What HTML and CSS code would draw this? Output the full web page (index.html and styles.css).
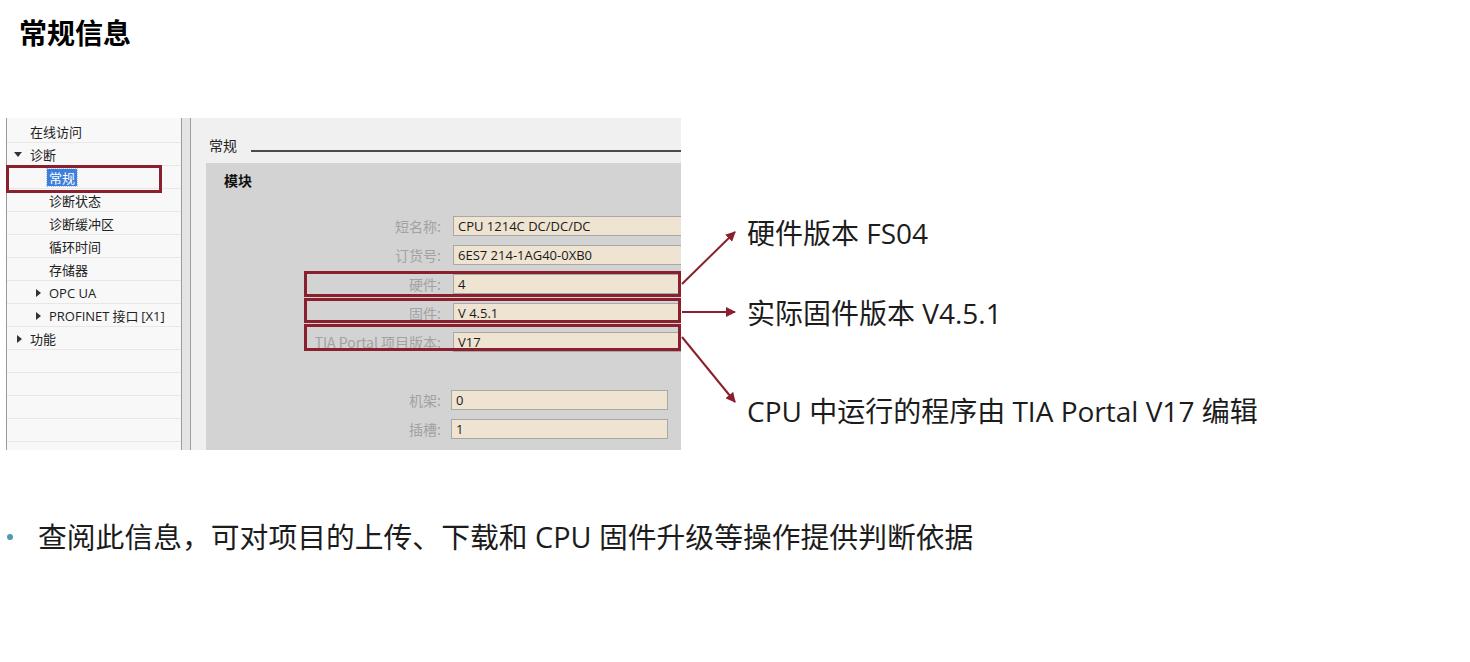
FILE: index.html
```html
<!DOCTYPE html>
<html>
  <head>
    <meta charset="utf-8" />
    <link rel="stylesheet" href="styles.css">
    <title>常规信息</title>
  </head>
  <body>
    <h1 class="title">常规信息</h1>

    <div class="figure">
      <div class="shot">
        <div class="tree">
          <div class="node lvl0">在线访问</div>
          <div class="node top"><span class="caret down"></span>诊断</div>
          <div class="node lvl1"><span class="sel">常规</span></div>
          <div class="node lvl1">诊断状态</div>
          <div class="node lvl1">诊断缓冲区</div>
          <div class="node lvl1">循环时间</div>
          <div class="node lvl1">存储器</div>
          <div class="node sub"><span class="caret right"></span><span class="latin">OPC UA</span></div>
          <div class="node sub"><span class="caret right"></span><span><span class="latin">PROFINET</span> 接口 <span class="latin">[X1]</span></span></div>
          <div class="node top2"><span class="caret right"></span>功能</div>
        </div>
        <div class="splitter"></div>
        <div class="pane">
          <div class="pane-head">
            <span class="pane-name">常规</span>
            <span class="rule"></span>
          </div>
          <div class="module">
            <div class="module-title">模块</div>
            <div class="fields">
              <div class="field"><span class="label">短名称:</span><span class="input">CPU 1214C DC/DC/DC</span></div>
              <div class="field"><span class="label">订货号:</span><span class="input">6ES7 214-1AG40-0XB0</span></div>
              <div class="field"><span class="label">硬件:</span><span class="input">4</span></div>
              <div class="field"><span class="label">固件:</span><span class="input">V 4.5.1</span></div>
              <div class="field"><span class="label">TIA Portal 项目版本:</span><span class="input">V17</span></div>
              <div class="field short spaced"><span class="label">机架:</span><span class="input">0</span></div>
              <div class="field short"><span class="label">插槽:</span><span class="input">1</span></div>
            </div>
          </div>
        </div>

        <!-- annotation boxes over the screenshot -->
        <div class="mark mark-sel"></div>
        <div class="mark mark-hw"></div>
        <div class="mark mark-fw"></div>
        <div class="mark mark-tia"></div>
      </div>

      <div class="notes">
        <div class="note note-hw">硬件版本 FS04</div>
        <div class="note note-fw">实际固件版本 V4.5.1</div>
        <div class="note note-tia">CPU 中运行的程序由 TIA Portal V17 编辑</div>
      </div>

      <svg class="arrows" width="760" height="332" viewBox="0 0 760 332">
        <defs>
          <marker id="head" viewBox="0 0 10 10" refX="9" refY="5" markerWidth="5" markerHeight="5" orient="auto">
            <path d="M0,0 L10,5 L0,10 z" fill="#8a1f2d" />
          </marker>
        </defs>
        <line x1="682" y1="166" x2="735" y2="114" marker-end="url(#head)" />
        <line x1="682" y1="194" x2="735" y2="194" marker-end="url(#head)" />
        <line x1="682" y1="219" x2="735" y2="284" marker-end="url(#head)" />
      </svg>
    </div>

    <p class="bullet">查阅此信息，可对项目的上传、下载和 CPU 固件升级等操作提供判断依据</p>
  </body>
</html>
```

FILE: styles.css
```css
body {
  margin: 0;
  font-family: "Open Sans", "Noto Sans CJK SC", sans-serif;
  color: #1c1c1c;
  background: #fff;
}

.title {
  margin: 0;
  padding: 13px 0 0 19px;
  font-size: 28px;
  line-height: 40px;
  font-weight: bold;
  color: #000;
}

.figure {
  position: relative;
  display: flex;
  margin-top: 65px;
}

/* screenshot of the TIA portal dialog */
.shot {
  position: relative;
  display: flex;
  flex: none;
  width: 675px;
  height: 332px;
  margin-left: 6px;
  overflow: hidden;
  font-family: "Noto Sans CJK SC", sans-serif;
  font-size: 13px;
}

.tree {
  flex: none;
  width: 174px;
  padding-top: 2px;
  border-left: 1px solid #9a9a9a;
  background-color: #f8f8f8;
  background-image: repeating-linear-gradient(to bottom, transparent 0 22px, #e7e7e7 22px 23px);
  background-position: 0 2px;
  color: #222;
}

.node {
  display: flex;
  align-items: center;
  height: 23px;
  white-space: nowrap;
}

.lvl0 {
  padding-left: 23px;
}

.lvl1 {
  padding-left: 42px;
}

.top {
  padding-left: 7px;
}

.top .caret {
  margin-right: 8px;
}

.top2 {
  padding-left: 10px;
}

.top2 .caret,
.sub .caret {
  margin-right: 8px;
}

.sub {
  padding-left: 29px;
}

.caret {
  display: inline-block;
  width: 0;
  height: 0;
}

.caret.down {
  border-left: 4px solid transparent;
  border-right: 4px solid transparent;
  border-top: 5px solid #333;
}

.caret.right {
  border-top: 4px solid transparent;
  border-bottom: 4px solid transparent;
  border-left: 5px solid #333;
}

.latin {
  font-family: "Open Sans", sans-serif;
  font-size: 13px;
}

.sel {
  padding: 0 2px;
  margin-left: -2px;
  background: #3d7fdc;
  color: #fff;
  outline: 1px dotted #a9c6f0;
  line-height: 17px;
}

.splitter {
  flex: none;
  width: 8px;
  border-left: 1px solid #9c9c9c;
  border-right: 1px solid #9c9c9c;
  background: #e4e4e4;
}

.pane {
  display: flex;
  flex-direction: column;
  flex: 1;
  min-width: 0;
  padding-left: 15px;
  background: #f0f0f0;
}

.pane-head {
  display: flex;
  align-items: flex-start;
  height: 45px;
  padding-left: 3px;
}

.pane-name {
  margin-top: 18px;
  line-height: 18px;
  font-size: 14px;
  color: #222;
}

.rule {
  flex: 1;
  height: 2px;
  margin: 32px 0 0 14px;
  background: #4a4a4a;
}

.module {
  flex: 1;
  padding: 8px 0 0 18px;
  background: #d3d3d3;
}

.module-title {
  font-size: 14px;
  line-height: 18px;
  font-weight: bold;
  color: #111;
}

.fields {
  margin-top: 22px;
  padding-left: 80px;
}

.field {
  display: flex;
  align-items: center;
  height: 29px;
}

.field.spaced {
  margin-top: 29px;
}

.label {
  flex: none;
  width: 137px;
  padding-right: 6px;
  margin-right: 6px;
  text-align: right;
  font-size: 14px;
  color: #a2a2a2;
  white-space: nowrap;
}

.input {
  flex: none;
  box-sizing: border-box;
  width: 260px;
  height: 20px;
  padding: 0 4px;
  border: 1px solid #a8a8a8;
  background: #efe3d1;
  font-family: "Open Sans", sans-serif;
  font-size: 13px;
  line-height: 18px;
  color: #1a1a1a;
  white-space: nowrap;
}

.short .input {
  width: 217px;
  margin-left: -2px;
}

.mark {
  position: absolute;
  box-sizing: border-box;
  border: 3px solid #8a1f2d;
}

.mark-sel {
  left: 0;
  top: 47px;
  width: 156px;
  height: 28px;
}

.mark-hw {
  left: 298px;
  top: 153px;
  width: 377px;
  height: 26px;
}

.mark-fw {
  left: 298px;
  top: 180px;
  width: 377px;
  height: 25px;
}

.mark-tia {
  left: 298px;
  top: 206px;
  width: 377px;
  height: 27px;
}

/* callouts */
.notes {
  padding: 95px 0 0 66px;
  font-size: 28px;
  line-height: 40px;
  white-space: nowrap;
}

.note-fw {
  margin-top: 40px;
}

.note-tia {
  margin-top: 58px;
}

.arrows {
  position: absolute;
  left: 0;
  top: 0;
  pointer-events: none;
}

.arrows line {
  stroke: #8a1f2d;
  stroke-width: 2;
}

.bullet {
  display: flex;
  align-items: center;
  margin: 67px 0 0;
  font-size: 28.8px;
  line-height: 40px;
}

.bullet::before {
  content: "";
  flex: none;
  width: 6px;
  height: 6px;
  margin: 0 25px 0 7px;
  border-radius: 50%;
  background: #4f9aab;
}
```
